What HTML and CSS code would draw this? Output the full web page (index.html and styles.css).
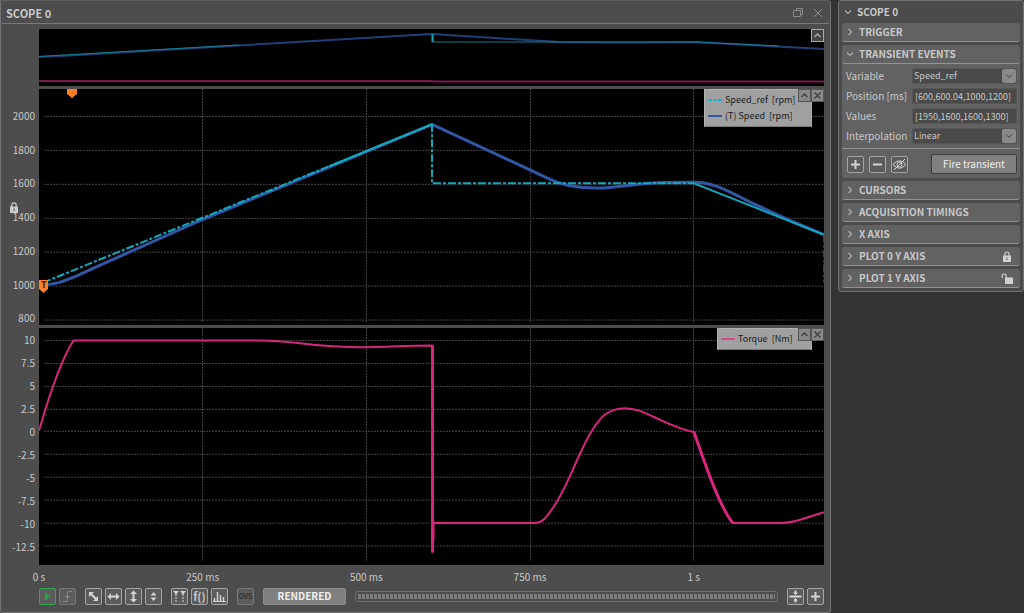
FILE: index.html
```html
<!DOCTYPE html>
<html lang="en">
<head>
<meta charset="utf-8">
<title>Scope 0</title>
<link rel="stylesheet" href="styles.css">
</head>
<body>
<main class="scope">
  <header class="titlebar">
    <h1>SCOPE 0</h1>
    <button class="win" aria-label="Restore"><svg width="10" height="10" viewBox="0 0 10 10"><path d="M3.500 2.500V.500h6v6h-2M.500 2.500h7v6h-7z"/></svg></button>
    <button class="win" aria-label="Close"><svg width="10" height="10" viewBox="0 0 10 10"><path d="M1 1l8 8m0-8l-8 8"/></svg></button>
  </header>

  <section class="row overview">
    <div class="scale"></div>
    <div class="plot">
      <svg class="chart" viewBox="0 0 785 57" preserveAspectRatio="none">
        <path class="trace mag-dim" d="M0 52H393L394 52.500H785"/>
        <path class="trace blue-dim" d="M0 28L30 26.500L393 5L520 13Q580 14 655 13L785 20"/>
        <path class="trace teal-dim" d="M0 27.500L200 16"/>
        <path class="trace teal-dim" d="M393.500 13H655L740 17"/>
        <path class="trace teal-edge" d="M393.500 5V13"/>
      </svg>
      <div class="plot-actions"><button class="mini outlined" aria-label="Collapse overview"><svg width="11" height="11" viewBox="0 0 11 11"><path d="M2.500 7l3-3 3 3"/></svg></button></div>
    </div>
  </section>

  <section class="row speed">
    <div class="scale speed-scale"><span>2000</span><span>1800</span><span>1600</span><span>1400</span><span>1200</span><span>1000</span><span>800</span>
      <svg class="scale-lock" width="8" height="11" viewBox="0 0 8 11"><path d="M1.800 5V3a2.200 2.200 0 0 1 4.400 0v2" fill="none" stroke="#ccc" stroke-width="1.200"/><path d="M0 4.500h8V11H0z" fill="#ccc"/><path d="M3.500 6.500h1v2.500h-1z" fill="#4d4d4d"/></svg>
    </div>
    <div class="plot">
      <svg class="chart" viewBox="0 0 785 237" preserveAspectRatio="none">
        <path class="grid" d="M5 27.500H785M5 61.500H785M5 95.500H785M5 129.500H785M5 163.500H785M5 197.500H785M5 231.500H785M163.500 0V233M327.500 0V233M491.500 0V233M654.500 0V233"/>
        <path class="trace blue" d="M4 196C18 196 26 192 36 188L60 177L163 131L245 97L393 35.500L491 81L510 90C524 97 540 99.300 557 99.300C580 99 600 94 625 93.800L654 93.500C672 93 685 100 711 113.300L754 133L785 146"/>
        <path class="trace ref dashed" d="M4 194L393 35.500V94.500H655"/>
        <path class="trace ref" d="M655 94.500L785 146M290 77.500L393 35.500"/>
        <path class="ref-end" d="M784.500 146V194"/>
        <path class="orange" d="M28 0h10v5l-5 4-5-4z"/>
      </svg>
      <div class="trigger"><svg width="10" height="13" viewBox="0 0 10 13"><path d="M0 0h9v9l-4.500 4L0 9z" fill="#ff7f27"/></svg><b>T</b></div>
      <ul class="legend legend-speed">
        <li><svg width="14" height="4" viewBox="0 0 14 4"><path d="M0 2h4m1.500 0h3m1.500 0h4" stroke="#12b4c8" stroke-width="2"/></svg>Speed_ref&nbsp; [rpm]</li>
        <li><svg width="14" height="4" viewBox="0 0 14 4"><path d="M0 2h14" stroke="#3158a6" stroke-width="2"/></svg>(T) Speed&nbsp; [rpm]</li>
      </ul>
      <div class="plot-actions"><button class="mini" aria-label="Collapse plot"><svg width="11" height="11" viewBox="0 0 11 11"><path d="M2.500 7l3-3 3 3"/></svg></button><button class="mini" aria-label="Close plot"><svg width="11" height="11" viewBox="0 0 11 11"><path d="M2.500 2.500l6 6m0-6l-6 6"/></svg></button></div>
    </div>
  </section>

  <section class="row torque">
    <div class="scale torque-scale"><span>10</span><span>7.5</span><span>5</span><span>2.5</span><span>0</span><span>-2.5</span><span>-5</span><span>-7.5</span><span>-10</span><span>-12.5</span></div>
    <div class="plot">
      <svg class="chart" viewBox="0 0 785 237" preserveAspectRatio="none">
        <path class="grid" d="M5 12.500H785M5 35.500H785M5 58.500H785M5 81.500H785M5 103.500H785M5 126.500H785M5 149.500H785M5 172.500H785M5 195.500H785M5 218.500H785M163.500 0V233M327.500 0V233M491.500 0V233M654.500 0V233"/>
        <path class="trace magenta" d="M0 103C10 68 22 32 34.500 12.500H222C255 12.500 270 19 318 19.300C350 19.300 365 17.500 393.500 17.500V225M394.500 213V195.300H496C502 195.300 506 193 517.700 174.300C528 157 533 143 541 126C550 106 557 94 566 86.700C573 81.500 579 80.300 586 80.300C598 80.300 608 86 621 92C632 97 643 102 655 104.300C666 136 680 178 693.700 195.300H742C757 195.300 766 190 785 184.500"/>
        <path class="trace magenta heavy" d="M393.500 18V225M655 104.300C666 136 680 178 693.700 195.300"/>
      </svg>
      <ul class="legend legend-torque">
        <li><svg width="14" height="4" viewBox="0 0 14 4"><path d="M0 2h14" stroke="#e0307f" stroke-width="1.500"/></svg>Torque&nbsp; [Nm]</li>
      </ul>
      <div class="plot-actions"><button class="mini" aria-label="Collapse plot"><svg width="11" height="11" viewBox="0 0 11 11"><path d="M2.500 7l3-3 3 3"/></svg></button><button class="mini" aria-label="Close plot"><svg width="11" height="11" viewBox="0 0 11 11"><path d="M2.500 2.500l6 6m0-6l-6 6"/></svg></button></div>
    </div>
  </section>

  <div class="time-axis"><span>0 s</span><span>250 ms</span><span>500 ms</span><span>750 ms</span><span>1 s</span></div>

  <footer class="toolbar">
    <div class="group">
      <button class="tool run" aria-label="Run"><svg width="15" height="15" viewBox="0 0 15 15"><path class="fill" d="M5 3l5 4.500-5 4.500z"/></svg></button>
      <button class="tool off" aria-label="Trigger edge"><svg width="15" height="15" viewBox="0 0 15 15"><path class="line" d="M2.500 12.500h5v-10h5M5 7.500h5"/><path class="fill" d="M5 8.500l2.500-3 2.500 3z"/></svg></button>
    </div>
    <div class="group">
      <button class="tool" aria-label="Fit both axes"><svg width="15" height="15" viewBox="0 0 15 15"><path class="line thick" d="M4 4l7 7"/><path class="fill" d="M3 3h5L3 8zM12 12H7l5-5z"/></svg></button>
      <button class="tool" aria-label="Fit horizontally"><svg width="15" height="15" viewBox="0 0 15 15"><path class="line thick" d="M4 7.500h7"/><path class="fill" d="M1.500 7.500L5 4v7zM13.500 7.500L10 4v7z"/></svg></button>
      <button class="tool" aria-label="Fit vertically"><svg width="15" height="15" viewBox="0 0 15 15"><path class="line thick" d="M7.500 4v7"/><path class="fill" d="M7.500 1.500L4 5h7zM7.500 13.500L4 10h7z"/></svg></button>
      <button class="tool" aria-label="Center vertically"><svg width="15" height="15" viewBox="0 0 15 15"><path class="fill" d="M7.500 3L4.500 6.500h6zM7.500 12l3-3.500h-6z"/></svg></button>
    </div>
    <div class="group">
      <button class="tool" aria-label="Cursors"><svg width="15" height="15" viewBox="0 0 15 15"><path class="line" d="M1.500 2.500h5M8.500 2.500h5"/><path class="fill" d="M2 3h4L4 6zM9 3h4l-2 3z"/><path class="line" stroke-dasharray="2 1" d="M4 5v8M11 5v8"/></svg></button>
      <button class="tool fn" aria-label="Functions">f()</button>
      <button class="tool" aria-label="Spectrum"><svg width="15" height="15" viewBox="0 0 15 15"><path class="line" d="M1 12.500h13"/><path class="line bar" d="M2.500 12V9M5.500 12V3M8.500 12V6M11.500 12V8"/></svg></button>
    </div>
    <button class="tool off ovs">OVS</button>
    <button class="rendered">RENDERED</button>
    <div class="buffer"><div class="cells"></div></div>
    <div class="group end">
      <button class="tool" aria-label="Distribute plots"><svg width="15" height="15" viewBox="0 0 15 15"><path class="line thick" d="M1.500 7.500h12M7.500 1.500v3M7.500 10.500v3"/><path class="fill" d="M5 3.500h5L7.500 6zM5 11.500h5L7.500 9z"/></svg></button>
      <button class="tool" aria-label="Add plot"><svg width="15" height="15" viewBox="0 0 15 15"><path class="line thick" d="M3 7.500h9M7.500 3v9"/></svg></button>
    </div>
  </footer>
</main>

<aside class="settings">
  <button class="head top"><svg class="chev" width="8" height="8" viewBox="0 0 8 8"><path d="M1 2.500l3 3 3-3"/></svg>SCOPE 0</button>
  <button class="head"><svg class="chev" width="8" height="8" viewBox="0 0 8 8"><path d="M2.500 1l3 3-3 3"/></svg>TRIGGER</button>
  <section class="events">
    <button class="head"><svg class="chev" width="8" height="8" viewBox="0 0 8 8"><path d="M1 2.500l3 3 3-3"/></svg>TRANSIENT EVENTS</button>
    <form class="fields">
      <label for="variable">Variable</label>
      <div class="pick"><select id="variable"><option>Speed_ref</option></select><svg width="14" height="14" viewBox="0 0 14 14"><path d="M4 5.500l3 3 3-3"/></svg></div>
      <label for="position">Position [ms]</label>
      <input id="position" type="text" value="[600,600.04,1000,1200]">
      <label for="values">Values</label>
      <input id="values" type="text" value="[1950,1600,1600,1300]">
      <label for="interpolation">Interpolation</label>
      <div class="pick"><select id="interpolation"><option>Linear</option></select><svg width="14" height="14" viewBox="0 0 14 14"><path d="M4 5.500l3 3 3-3"/></svg></div>
    </form>
    <div class="actions">
      <button class="tool" aria-label="Add event"><svg width="15" height="15" viewBox="0 0 15 15"><path class="line thick" d="M3 7.500h9M7.500 3v9"/></svg></button>
      <button class="tool" aria-label="Remove event"><svg width="15" height="15" viewBox="0 0 15 15"><path class="line thick" d="M3 7.500h9"/></svg></button>
      <button class="tool" aria-label="Hide events"><svg width="15" height="15" viewBox="0 0 15 15"><path class="line" d="M1 7.500Q7.500 0 14 7.500Q7.500 15 1 7.500zM2 13L13 2"/><circle class="line" cx="7.500" cy="7.500" r="2.500"/></svg></button>
      <button class="fire">Fire transient</button>
    </div>
  </section>
  <button class="head"><svg class="chev" width="8" height="8" viewBox="0 0 8 8"><path d="M2.500 1l3 3-3 3"/></svg>CURSORS</button>
  <button class="head"><svg class="chev" width="8" height="8" viewBox="0 0 8 8"><path d="M2.500 1l3 3-3 3"/></svg>ACQUISITION TIMINGS</button>
  <button class="head"><svg class="chev" width="8" height="8" viewBox="0 0 8 8"><path d="M2.500 1l3 3-3 3"/></svg>X AXIS</button>
  <button class="head"><svg class="chev" width="8" height="8" viewBox="0 0 8 8"><path d="M2.500 1l3 3-3 3"/></svg>PLOT 0 Y AXIS<svg class="lock" width="12" height="11" viewBox="0 0 12 11"><path d="M4 5V3a2 2 0 0 1 4 0v2" fill="none" stroke="#d0d0d0" stroke-width="1.200"/><path d="M2 4.500h8V11H2z" fill="#d0d0d0"/><path d="M5.500 6.500h1V9h-1z" fill="#626262"/></svg></button>
  <button class="head"><svg class="chev" width="8" height="8" viewBox="0 0 8 8"><path d="M2.500 1l3 3-3 3"/></svg>PLOT 1 Y AXIS<svg class="lock" width="12" height="11" viewBox="0 0 12 11"><path d="M1.200 5V3a2 2 0 0 1 4 0v2" fill="none" stroke="#d0d0d0" stroke-width="1.200"/><path d="M4 4.500h8V11H4z" fill="#d0d0d0"/></svg></button>
</aside>
</body>
</html>
```
FILE: styles.css
```css
* { box-sizing: border-box; }
body {
  margin: 0;
  min-height: 100vh;
  display: flex;
  align-items: flex-start;
  gap: 7px;
  background: #343434;
  color: #c8c8c8;
  font: 10px/14px "Noto Sans CJK SC", "Noto Sans", sans-serif;
}
button, input, select { font: inherit; color: inherit; margin: 0; padding: 0; border: 0; background: none; }
svg { display: block; flex: none; }

.scope {
  flex: 1;
  min-width: 0;
  min-height: 100vh;
  display: flex;
  flex-direction: column;
  padding: 0 6px 7px 0;
  background: #4d4d4d;
  border: 1px solid #747474;
  border-top-color: #606060;
  border-radius: 0 3px 3px 3px;
}
.titlebar {
  display: flex;
  align-items: center;
  gap: 10px;
  height: 23px;
  margin: 0 -5px 5px 1px;
  padding: 1px 6px 0 4px;
  border-bottom: 1px solid #7a7a7a;
}
h1 { flex: 1; margin: 0; font-size: 11px; line-height: 16px; font-weight: 700; }
.win path { fill: none; stroke: #8c8c8c; }

.row { display: grid; grid-template-columns: 38px minmax(0, 1fr); margin-bottom: 3px; }
.overview { flex: 57 1 0; }
.speed, .torque { flex: 237 1 0; }
.plot { position: relative; background: #000; min-height: 0; }
.chart { position: absolute; inset: 0; width: 100%; height: 100%; }
.scale { position: relative; display: flex; flex-direction: column; justify-content: space-between; text-align: right; padding-right: 4px; }
.speed-scale { padding-top: 20px; }
.torque-scale { padding-top: 5px; padding-bottom: 11px; }
.scale-lock { position: absolute; left: 9px; top: 48%; }

.grid { fill: none; stroke: #444; stroke-dasharray: 2 1; }
.trace { fill: none; stroke-width: 2; stroke-linejoin: round; }
.blue { stroke: #3158a6; stroke-width: 3; }
.ref { stroke: #12a9bf; }
.dashed { stroke-dasharray: 8 2 3 2; }
.ref-end { fill: none; stroke: #0b5560; stroke-dasharray: 8 2 3 2; }
.magenta { stroke: #d9267c; }
.heavy { stroke-width: 3; }
.mag-dim { stroke: #7d1648; }
.blue-dim { stroke: #213f76; }
.teal-dim { stroke: #127d96; stroke-width: 1; }
.teal-edge { stroke: #12a9bf; }
.orange { fill: #ff7f27; }

.trigger { position: absolute; left: 0; top: 81%; }
.trigger b { position: absolute; left: 2px; top: 0; font-size: 9px; line-height: 10px; color: #222; }

.plot-actions { position: absolute; top: 0; right: 0; display: flex; }
.mini { width: 13px; height: 13px; background: #888; border: 1px solid #555; }
.mini path { fill: none; stroke: #444; stroke-width: 1.500; }
.outlined { background: #444; border-color: #aaa; }
.outlined path { stroke: #aaa; }
.legend {
  position: absolute;
  top: 0;
  right: 12px;
  margin: 0;
  padding: 2px 3px;
  list-style: none;
  background: #a0a0a0;
  border: 1px solid #b0b0b0;
  border-bottom-color: #777;
  color: #1c1c1c;
  font-size: 9px;
}
.legend li { display: flex; align-items: center; gap: 3px; height: 16px; white-space: nowrap; }
.legend-speed { width: 108px; }
.legend-torque { width: 95px; }

.time-axis {
  display: grid;
  grid-template-columns: repeat(4, 20.850%) 1fr;
  margin: 2px 0 4px 38px;
}
.time-axis span { width: 60px; margin-left: -30px; text-align: center; }

.toolbar { display: flex; align-items: center; gap: 9px; padding-left: 38px; height: 17px; }
.group { display: flex; gap: 3px; }
.tool {
  width: 17px;
  height: 17px;
  flex: none;
  background: #5c5c5c;
  border: 1px solid #a4a4a4;
  border-radius: 2px;
}
.tool .line { fill: none; stroke: #d4d4d4; }
.tool .thick { stroke-width: 2; }
.tool .bar { stroke-width: 1.500; }
.tool .fill { fill: #d4d4d4; }
.tool.run { border-color: #35a558; }
.tool.run .fill { fill: #1fa64a; }
.tool.off { border-color: #777; }
.tool.off .line { stroke: #858585; }
.tool.off .fill { fill: #858585; }
.fn { font-weight: 700; font-size: 11px; line-height: 14px; }
.ovs { font-weight: 700; font-size: 7px; line-height: 14px; color: #333; }
.rendered {
  width: 83px;
  height: 17px;
  background: #808080;
  border: 1px solid #8c8c8c;
  border-radius: 2px;
  color: #f0f0f0;
  font-weight: 700;
  line-height: 14px;
}
.buffer { flex: 1; height: 11px; padding: 2px; border: 1px solid #707070; border-radius: 3px; }
.cells { height: 5px; background: repeating-linear-gradient(90deg, #7c7c7c 0 3px, #4d4d4d 3px 4px); }

.settings {
  width: 186px;
  flex: none;
  display: flex;
  flex-direction: column;
  gap: 3px;
  padding: 3px;
  background: #4b4b4b;
  border: 1px solid #727272;
  border-radius: 3px;
}
.head {
  display: flex;
  align-items: center;
  gap: 5px;
  height: 19px;
  padding: 0 7px 0 4px;
  width: 100%;
  background: #626262;
  border-bottom: 1px solid #929292;
  border-radius: 3px;
  font-size: 10px;
  font-weight: 700;
  text-align: left;
}
.top { height: 16px; background: none; border: 0; padding-left: 2px; }
.chev path { fill: none; stroke: #b0b0b0; stroke-width: 1.200; }
.lock { margin-left: auto; }
.events { background: #626262; border-radius: 3px; }
.fields {
  display: grid;
  grid-template-columns: 62px minmax(0, 1fr);
  gap: 4px;
  align-items: center;
  padding: 4px 3px 4px 4px;
  border-bottom: 1px solid #929292;
}
.fields input, .fields select { display: block; width: 100%; height: 16px; background: #4a4a4a; border: 1px solid #555; border-radius: 2px; padding: 0 1px; font-size: 9px; }
.fields select { appearance: none; }
.fields input { padding-left: 2px; }
.pick { position: relative; }
.pick svg { position: absolute; right: 1px; top: 1px; background: #8a8a8a; border-radius: 2px; pointer-events: none; }
.pick path { fill: none; stroke: #3c3c3c; }
.actions { display: flex; align-items: center; gap: 5px; padding: 5px 3px 4px 5px; }
.fire {
  width: 86px;
  height: 20px;
  margin-left: auto;
  background: #808080;
  border: 1px solid #3e3e3e;
  border-radius: 2px;
  color: #eee;
}
```
